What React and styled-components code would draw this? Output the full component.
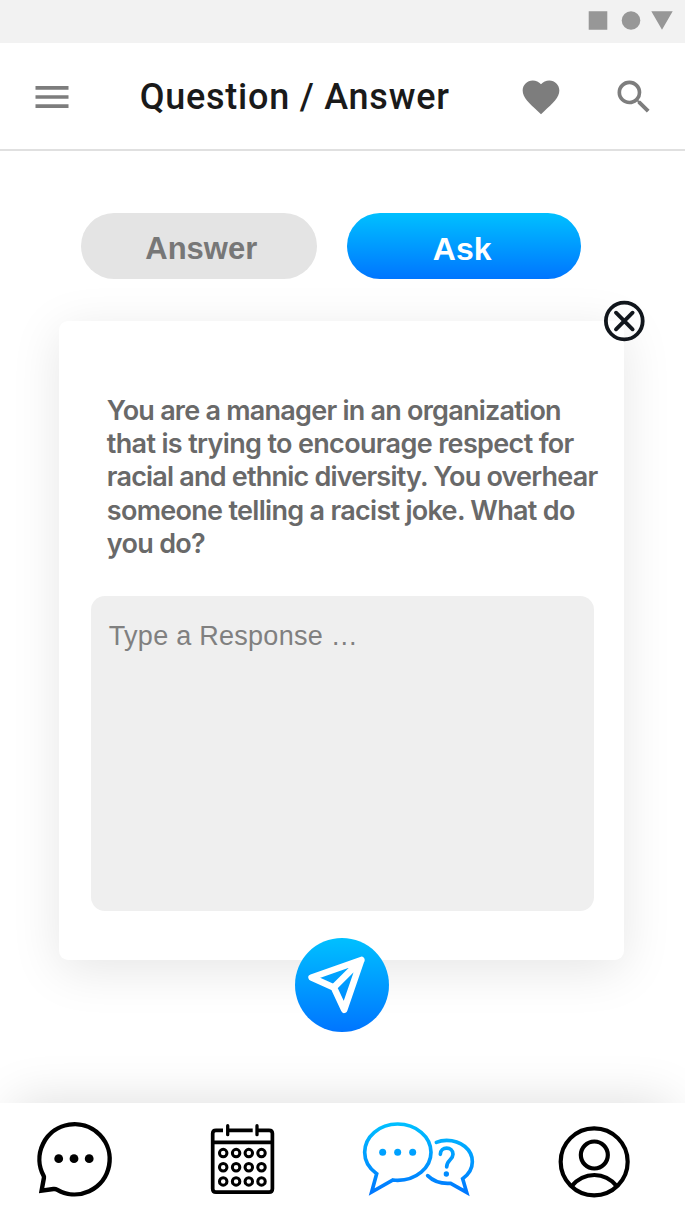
import React from "react";
import styled, { createGlobalStyle } from "styled-components";
import { MdFavorite, MdMenu, MdSearch } from "react-icons/md";

const GlobalStyle = createGlobalStyle`
  *, *::before, *::after { box-sizing: border-box; }
  body { margin: 0; background: #fff; }
  button { border: 0; padding: 0; margin: 0; background: none; font: inherit; color: inherit; }
  svg { display: block; flex: none; }
`;

const Screen = styled.div`
  display: flex;
  flex-direction: column;
  height: 1217px;
  width: 685px;
  overflow: hidden;
  background: #fff;
  font-family: "Liberation Sans", Arial, sans-serif;
`;

const StatusBar = styled.div`
  display: flex;
  justify-content: flex-end;
  height: 42.5px;
  padding: 11px 12px 0 0;
  background: #f2f2f2;
`;

const Header = styled.header`
  display: flex;
  align-items: flex-start;
  height: 108px;
  padding: 32.7px 29.2px 0 29.8px;
  border-bottom: 2px solid #e0e0e0;
  background: #fff;
`;

const IconButton = styled.button`
  width: 44px;
  height: 44px;
  color: #7d7d7d;
  margin-left: ${(p) => p.$gap || 0}px;
`;

const Title = styled.h1`
  flex: 1;
  margin: 0.8px 0 0 65.9px;
  font: 500 36px/42px Roboto, sans-serif;
  letter-spacing: 0.76px;
  color: #1a1a1a;
  white-space: nowrap;
`;

const Main = styled.main`
  flex: 1;
  padding: 62.5px 61px 0 59px;
`;

const Tabs = styled.div`
  display: flex;
  gap: 29.7px;
  padding-left: 22.3px;
`;

const Tab = styled.button`
  width: ${(p) => (p.$active ? 234.3 : 236)}px;
  height: 65.6px;
  padding: ${(p) => (p.$active ? "6px 4px 0 0" : "7px 0 0 4px")};
  border-radius: 33px;
  font-size: ${(p) => (p.$active ? 32 : 31)}px;
  font-weight: 700;
  line-height: 36px;
  color: ${(p) => (p.$active ? "#fff" : "#777")};
  background: ${(p) => (p.$active ? "linear-gradient(#00c0ff, #0075ff)" : "#e4e4e4")};
`;

const Card = styled.section`
  position: relative;
  width: 565px;
  height: 639.5px;
  margin-top: 42.4px;
  padding: 73px 30px 0 31.8px;
  border-radius: 9px;
  background: #fff;
  box-shadow: 0 10px 50px rgba(0, 0, 0, 0.1);
`;

const CloseButton = styled.button`
  position: absolute;
  top: -21px;
  right: -20.6px;
`;

const Question = styled.p`
  margin: 0 0 0 16px;
  font: 600 27px/33.2px Inter, sans-serif;
  color: #696969;
  white-space: nowrap;
`;

const Line = styled.span`
  display: block;
  letter-spacing: ${(p) => p.$tracking}px;
`;

const Response = styled.div`
  width: 503.2px;
  height: 315px;
  margin-top: 36px;
  padding: 25px 18px;
  border-radius: 14px;
  background: #efefef;
  font-size: 27px;
  line-height: 31px;
  letter-spacing: 0.27px;
  color: #808080;
`;

const SendButton = styled.button`
  position: absolute;
  left: 236.4px;
  bottom: -71.4px;
  width: 93.8px;
  height: 93.8px;
  border-radius: 50%;
  background: linear-gradient(#00c0ff, #0075ff);
`;

const NavBar = styled.nav`
  position: relative;
  display: flex;
  gap: 80px;
  height: 114px;
  padding: 14px 0 0 36px;
  background: #fff;
  box-shadow: 0 -16px 50px -14px rgba(0, 0, 0, 0.13);
`;

const StatusIcons = () => (
  <svg width="85" height="19" viewBox="588 11 85 19" fill="#979797">
    <path d="M588.7 11.3h18.6v18.4h-18.6zM651.3 11.3h21.4L662 29.7z" />
    <circle cx="631" cy="20.5" r="9.3" />
  </svg>
);

const CloseIcon = () => (
  <svg width="42" height="42" viewBox="-21 -21 42 42" fill="none" stroke="#11161c" strokeLinecap="round">
    <circle cx="0.3" r="18.4" strokeWidth="3.8" />
    <path d="M-8 -8.3L8.6 8.3M8.6 -8.3L-8 8.3" strokeWidth="3.9" />
  </svg>
);

const SendIcon = () => (
  <svg width="93.8" height="93.8" viewBox="295.4 938.2 93.8 93.8" fill="none" stroke="#fff" strokeWidth="6.6" strokeLinecap="round" strokeLinejoin="round">
    <path d="M361.7 960.2L312 977.7L334.2 987.6L344.6 1009.9L361.7 960.2L334.2 987.6" />
  </svg>
);

const ChatIcon = () => (
  <svg width="85" height="84" viewBox="36.6 1117 85 84">
    <path
      d="M44.3 1176A35.1 35.1 0 1 1 57.5 1189.6Q56 1188.7 54 1189L42.2 1190.6L44.5 1178Q44.7 1176.8 44.3 1176Z"
      fill="none"
      stroke="#000"
      strokeWidth="4.4"
    />
    <circle cx="59.3" cy="1158.7" r="4.4" />
    <circle cx="74.6" cy="1158.7" r="4.4" />
    <circle cx="89.8" cy="1158.7" r="4.4" />
  </svg>
);

const CalendarIcon = () => (
  <svg width="77" height="84" viewBox="201 1117 77 84" fill="none" stroke="#000" strokeWidth="3.7">
    <path d="M223 1130.3H216Q212.7 1130.3 212.7 1133.6V1188.8Q212.7 1192.2 216 1192.2H269Q272.4 1192.2 272.4 1188.8V1133.6Q272.4 1130.3 269 1130.3H257M228 1130.3H252.7M212.7 1142.3H272.4" />
    <path d="M227.7 1125.7V1134.7M257 1125.7V1134.7" strokeLinecap="round" strokeWidth="3.3" />
    {[1153.1, 1167.3, 1181.4].map((y) =>
      [223.2, 236.1, 248.8, 261.5].map((x) => (
        <circle key={`${x}-${y}`} cx={x} cy={y} r="3.75" strokeWidth="3" />
      ))
    )}
  </svg>
);

const QuestionsIcon = () => (
  <svg width="120" height="84" viewBox="24 81 360 252">
    <defs>
      <linearGradient id="bubbleBlue" gradientUnits="userSpaceOnUse" x1="0" y1="97" x2="0" y2="318">
        <stop offset="0" stopColor="#00c0ff" />
        <stop offset="1" stopColor="#0075ff" />
      </linearGradient>
    </defs>
    <g fill="none" stroke="url(#bubbleBlue)" strokeWidth="11" strokeLinecap="round">
      <path d="M80 251C58 236 44 213 44 187C44 140 88 102 143 102S243 140 243 187S198 271 143 271Q136 271 129 270L65 306Z" />
      <path d="M259 157Q273 151 290 151C333 151 367 179 367 215Q367 245 338 266L350 307L302 280C275 282 249 273 233 257" />
      <path d="M271 193C271 168 309 168 309 193C309 209 290 210 290 231" />
    </g>
    <g fill="url(#bubbleBlue)">
      <circle cx="98" cy="187" r="10.5" />
      <circle cx="143" cy="187" r="10.5" />
      <circle cx="188" cy="187" r="10.5" />
      <circle cx="289" cy="252" r="8" />
    </g>
  </svg>
);

const ProfileIcon = () => (
  <svg width="74" height="84" viewBox="54 81 222 252" fill="none" stroke="#000" strokeWidth="12.5">
    <circle cx="162.5" cy="215.5" r="100.5" />
    <circle cx="163" cy="195" r="40.5" />
    <path d="M94 289Q123 255 163 255T231 289" />
  </svg>
);

export default function App() {
  return (
    <>
      <GlobalStyle />
      <Screen>
        <StatusBar>
          <StatusIcons />
        </StatusBar>
        <Header>
          <IconButton aria-label="Menu">
            <MdMenu size={44} />
          </IconButton>
          <Title>Question / Answer</Title>
          <IconButton aria-label="Favorites">
            <MdFavorite size={44} />
          </IconButton>
          <IconButton aria-label="Search" $gap={48.9}>
            <MdSearch size={44} />
          </IconButton>
        </Header>
        <Main>
          <Tabs>
            <Tab>Answer</Tab>
            <Tab $active>Ask</Tab>
          </Tabs>
          <Card>
            <CloseButton aria-label="Close">
              <CloseIcon />
            </CloseButton>
            <Question>
              <Line $tracking={-0.76}>You are a manager in an organization</Line>
              <Line $tracking={-0.66}>that is trying to encourage respect for</Line>
              <Line $tracking={-0.8}>racial and ethnic diversity. You overhear</Line>
              <Line $tracking={-0.7}>someone telling a racist joke. What do</Line>
              <Line $tracking={-0.7}>you do?</Line>
            </Question>
            <Response>Type a Response …</Response>
            <SendButton aria-label="Send">
              <SendIcon />
            </SendButton>
          </Card>
        </Main>
        <NavBar>
          <ChatIcon />
          <CalendarIcon />
          <QuestionsIcon />
          <ProfileIcon />
        </NavBar>
      </Screen>
    </>
  );
}
